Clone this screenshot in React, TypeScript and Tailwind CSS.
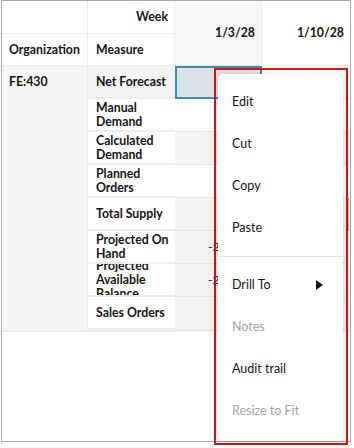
import { Fragment } from 'react';

const rows = [
  { label: 'Net Forecast', value: '', cell: 'selected' },
  { label: 'Manual Demand', value: '', cell: 'edit' },
  { label: 'Calculated Demand', value: '', cell: 'read' },
  { label: 'Planned Orders', value: '', cell: 'edit' },
  { label: 'Total Supply', value: '', cell: 'read' },
  { label: 'Projected On Hand', value: '-24,310', cell: 'read' },
  { label: 'Projected Available Balance', value: '-24,310', cell: 'read' },
  { label: 'Sales Orders', value: '', cell: 'read' },
];

const menu: ({ label: string; disabled?: boolean; sub?: boolean } | 'sep')[] = [
  { label: 'Edit' },
  { label: 'Cut' },
  { label: 'Copy' },
  { label: 'Paste' },
  'sep',
  { label: 'Drill To', sub: true },
  { label: 'Notes', disabled: true },
  { label: 'Audit trail' },
  { label: 'Resize to Fit', disabled: true },
];

function cellBg(kind: string) {
  if (kind === 'selected') return 'bg-[#dbe3e9] border-2 border-[#3b8fae]';
  if (kind === 'read') return 'bg-[#f4f4f4] border-b border-r border-[#e6e6e6]';
  return 'bg-white border-b border-r border-[#e6e6e6]';
}

export default function App() {
  return (
    <div className="w-[354px] h-[448px] bg-white pl-px" style={{ fontFamily: 'Lato, "Noto Sans", sans-serif' }}>
      <div className="relative w-[350px] h-[442px] border border-[#a8a8a8] bg-white">
        <div className="grid grid-cols-[86px_87px_87px_87px] grid-rows-[33px_32px_repeat(8,33px)] text-[12.3px] font-bold text-[#161513] leading-[14px] border-b-2 border-[#ececec]">
          {/* header */}
          <div className="border-b border-r border-[#efefef]" />
          <div className="flex items-center justify-end pr-[6px] border-b border-r border-[#efefef]">Week</div>
          <div className="row-span-2 flex items-center justify-end pr-[6px] bg-[#f7f7f7] border-b border-r border-[#e8e8e8]">1/3/28</div>
          <div className="row-span-2 flex items-center justify-end pr-[5px] border-b border-[#e8e8e8]">1/10/28</div>
          <div className="flex items-center pl-[7px] border-b border-r border-[#efefef]">Organization</div>
          <div className="flex items-center pl-2 border-b border-r border-[#efefef]">Measure</div>

          {/* body */}
          <div className="row-span-8 bg-[#f5f5f5] pl-[7px] pt-[9px] border-r border-[#ececec]">FE:430</div>
          {rows.map((r, i) => (
            <Fragment key={r.label}>
              <div
                className={`col-start-2 flex items-center overflow-hidden pl-2 pr-1 border-b-2 border-[#ececec] ${
                  i === 0 ? 'bg-[#f4f4f4]' : 'bg-white'
                }`}
              >
                <span className="block">{r.label}</span>
              </div>
              <div className={`flex items-center justify-end pr-[10px] font-normal ${cellBg(r.cell)}`}>{r.value}</div>
              <div
                className={`flex items-center justify-end ${
                  r.cell === 'edit' || r.cell === 'selected' ? 'bg-white' : 'bg-[#f4f4f4]'
                } border-b border-[#e6e6e6] ${i === 4 ? 'border-r-2 border-r-[#58d858]' : ''}`}
              />
            </Fragment>
          ))}
        </div>

        {/* context menu with red highlight */}
        <div className="absolute left-[212px] top-[67px] w-[134px] h-[377px] border-2 border-[#d1131a] pt-[4px] pl-[2px] pr-[3px] pb-[2px]">
          <div className="h-full rounded-[5px] bg-white shadow-[0_1px_6px_rgba(0,0,0,0.18)] pt-[7px] pb-2 text-[12.5px]">
            {menu.map((m, i) =>
              m === 'sep' ? (
                <div key={i} className="my-[7px] h-px bg-[#e2e2e2]" />
              ) : (
                <div
                  key={m.label}
                  className={`h-[42px] flex items-center justify-between pl-[14px] pr-[20px] ${
                    m.disabled ? 'text-[#a3a3a3]' : 'text-[#161513]'
                  }`}
                >
                  <span>{m.label}</span>
                  {m.sub && (
                    <svg width="7" height="10" viewBox="0 0 7 10">
                      <path d="M0 0 L7 5 L0 10 Z" fill="#161513" />
                    </svg>
                  )}
                </div>
              ),
            )}
          </div>
        </div>
      </div>
    </div>
  );
}
